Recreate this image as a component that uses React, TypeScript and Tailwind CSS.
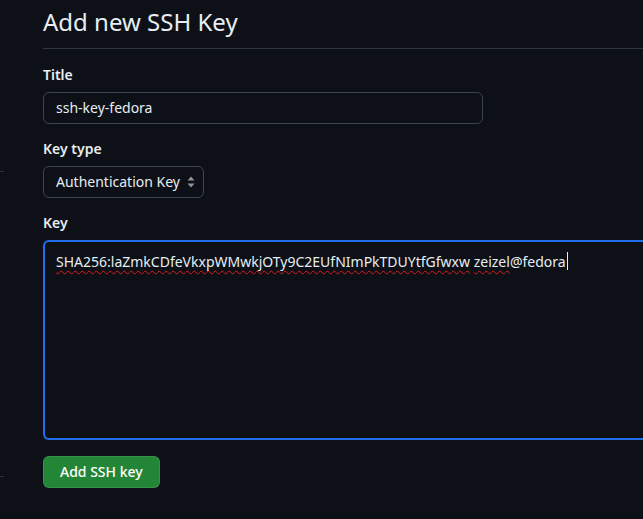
export default function App() {
  const labelClass = "block text-sm leading-[21px] font-semibold text-[#e6edf3] mb-[7px]";

  return (
    <div className="min-h-screen w-full overflow-hidden bg-[#0d1117] font-['Noto_Sans',sans-serif] text-[#e6edf3]">
      <div className="flex w-[760px]">
        {/* edge of the settings sidebar */}
        <div className="flex w-[43px] shrink-0 flex-col">
          <div className="mt-[171px] h-px w-[4px] bg-[#30363d]" />
          <div className="mt-[304px] h-px w-[4px] bg-[#30363d]" />
        </div>

        <div className="flex-1">
          <div className="border-b border-[#30363d] pt-[4px] pb-[8px]">
            <h2 className="text-2xl leading-9 font-normal">Add new SSH Key</h2>
          </div>

          <form className="pt-[15px]">
            <div>
              <label className={labelClass}>Title</label>
              <div className="w-[440px] rounded-md border border-[#3d444d] px-3 py-[5px] text-sm leading-5">
                ssh-key-fedora
              </div>
            </div>

            <div className="mt-[14px]">
              <label className={labelClass}>Key type</label>
              <div className="flex w-[161px] items-center justify-between rounded-md border border-[#3d444d] py-[5px] pl-3 pr-2 text-sm leading-5">
                <span>Authentication Key</span>
                <svg width="8" height="12" viewBox="0 0 8 12" className="text-[#8b949e]">
                  <path d="M4 0.5 L7.5 4.5 H0.5 Z" fill="currentColor" />
                  <path d="M4 11.5 L7.5 7.5 H0.5 Z" fill="currentColor" />
                </svg>
              </div>
            </div>

            <div className="mt-[14px]">
              <label className={labelClass}>Key</label>
              <div className="h-[200px] rounded-l-md border-2 border-r-0 border-[#1f6feb] px-[11px] py-[7px] text-sm leading-5">
                <span className="underline decoration-wavy decoration-[#d81b1b] decoration-1 underline-offset-[3px]">
                  SHA256:laZmkCDfeVkxpWMwkjOTy9C2EUfNImPkTDUYtfGfwxw
                </span>{" "}
                <span className="underline decoration-wavy decoration-[#d81b1b] decoration-1 underline-offset-[3px]">
                  zeizel
                </span>
                @fedora
                <span className="ml-px inline-block h-[18px] w-px translate-y-[3px] bg-[#e6edf3]" />
              </div>
            </div>

            <button
              type="button"
              className="mt-4 h-8 rounded-md border border-[rgba(240,246,252,0.1)] bg-[#238636] px-4 text-sm font-medium text-white"
            >
              Add SSH key
            </button>
          </form>
        </div>
      </div>
    </div>
  );
}
